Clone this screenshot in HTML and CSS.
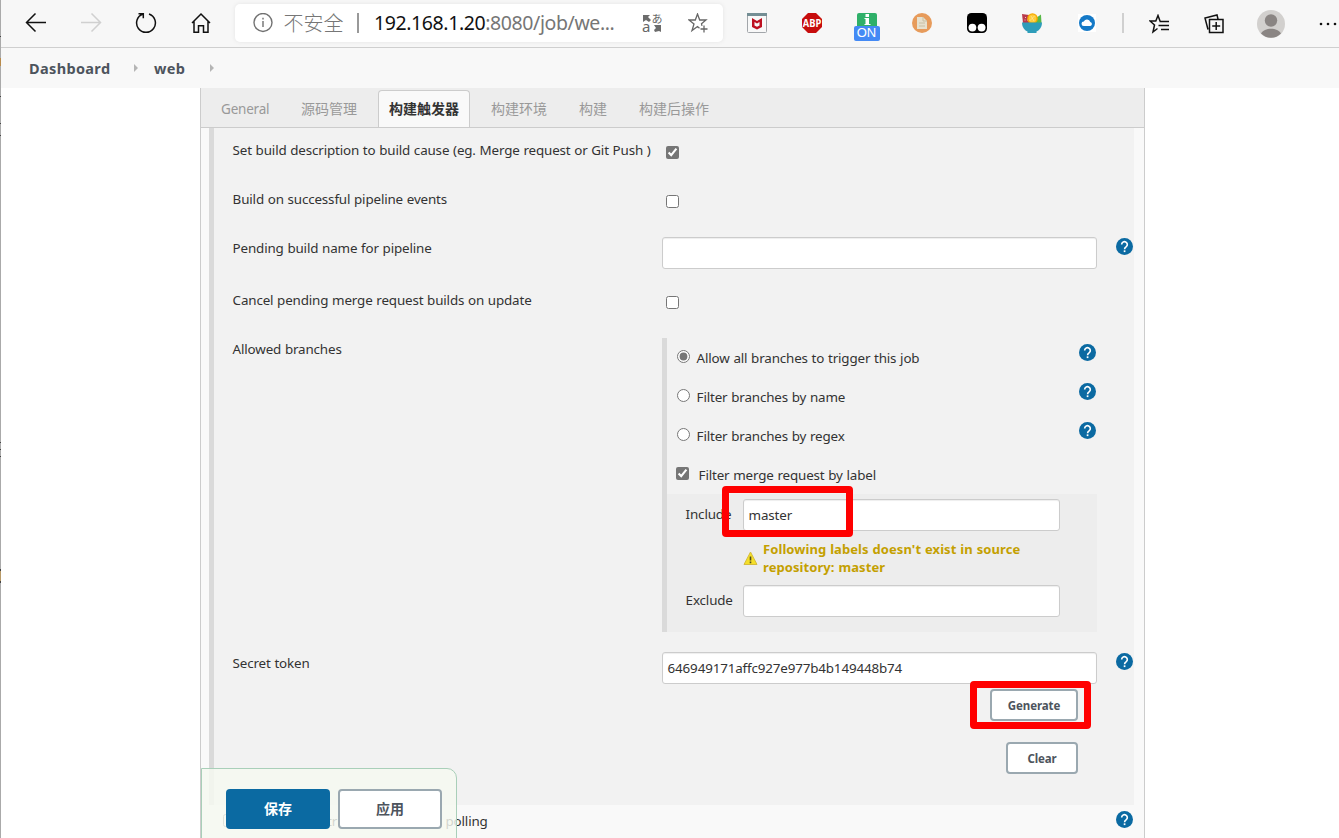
FILE: index.html
```html
<!DOCTYPE html>
<html lang="zh-CN">
<head>
<meta charset="utf-8">
<title>web Config [Jenkins]</title>
<link rel="stylesheet" href="styles.css">
</head>
<body>
<svg class="defs" width="0" height="0">
  <symbol id="help" viewBox="0 0 24 24"><circle cx="12" cy="12" r="12" fill="#0b6aa2"/><path d="M8 9.200a4 4 0 1 1 6.500 3.100c-1.600 1.200-2.400 1.800-2.400 3.500" fill="none" stroke="#fff" stroke-width="2.300"/><rect x="10.900" y="17.400" width="2.400" height="2.500" fill="#fff"/></symbol>
</svg>
<div class="window">
  <div class="edge"><i class="t1"></i><i class="t2"></i><i class="t3"></i><i class="t4"></i><i class="t5"></i><i class="t6"></i><i class="t7"></i><i class="t8"></i><i class="t9"></i></div>
  <header class="toolbar">
    <nav class="nav-icons">
      <svg width="22" height="22" viewBox="0 0 22 22" fill="none" stroke="#111" stroke-width="1.500"><path d="M21 10.500H1.500M10.500 1.500l-9 9 9 9"/></svg>
      <svg width="22" height="22" viewBox="0 0 22 22" fill="none" stroke="#d0d0d0" stroke-width="1.500"><path d="M1 10.500h19.500M11.500 1.500l9 9-9 9"/></svg>
      <svg width="22" height="22" viewBox="0 0 22 22" fill="none" stroke="#111" stroke-width="1.500"><path d="M14 2A9.400 9.400 0 1 1 8 2M3.500 1.700h4.800V6.200"/></svg>
      <svg width="22" height="22" viewBox="0 0 22 22" fill="none" stroke="#111" stroke-width="1.500"><path d="M2 11l9-9 9 9M4 9.500v10.700h4.500v-6.500h5v6.500H18V9.500"/></svg>
    </nav>
    <div class="address">
      <svg class="info" width="20" height="20" viewBox="0 0 20 20" fill="none" stroke="#717171" stroke-width="1.400"><circle cx="10" cy="9.500" r="9"/><path d="M10 8v6M10 4.800v1.700"/></svg>
      <span class="insecure">不安全</span><span class="sep"></span>
      <span class="url"><b>192.168.1.20</b>:8080/job/we...</span>
      <svg class="translate" width="22" height="24" viewBox="0 0 22 24"><path d="M1 4h7l-2 2 3 3-2 2-3-2-3 2zM12 14h7v7l-2-1-4 1-1-2 2-2z" fill="#6c6c6c"/><text x="9.500" y="12" class="kana">あ</text><text x="0" y="21" class="latin">a</text></svg>
      <svg class="star" width="20" height="20" viewBox="0 0 20 20" fill="none" stroke="#666" stroke-width="1.300"><path d="M11.500 15.200L9.500 13.500l-5.500 4 2-6.500-5-4h6.300L9.500 1l2.200 6H18l-4.500 3.800.5 2M16 12.500v7M12.500 16h7"/></svg>
    </div>
    <div class="extensions">
      <svg width="20" height="20" viewBox="0 0 20 20"><rect x=".5" y=".5" width="19" height="19" rx="1" fill="#f8f8f8" stroke="#a2a6aa"/><path d="M0 0h20v3H0z" fill="#748e94"/><path d="M5 5l5 3 5-3v9l-5 2.500L5 14z" fill="#bd1020"/><path d="M7.500 9l2.500 1.400L12.500 9v3.500L10 13.800l-2.500-1.300z" fill="#f8f8f8"/></svg>
      <svg width="20" height="20" viewBox="0 0 20 20"><path d="M6 0h8l6 6v8l-6 6H6l-6-6V6z" fill="#c70d0d"/><text x="10" y="13.800" text-anchor="middle" class="abp" textLength="18.500" lengthAdjust="spacingAndGlyphs">ABP</text></svg>
      <svg width="26" height="28" viewBox="0 0 26 28"><rect x="3" y="0" width="20" height="16" rx="2" fill="#2fb069"/><path d="M11.500 1h3.500v3h-3.500zM10.500 5H15v6h1.500v1h-6v-1h1V6h-1z" fill="#fff"/><rect x="0" y="13" width="26" height="15" rx="2" fill="#448af5"/><text x="12.500" y="24.300" text-anchor="middle" class="on">ON</text></svg>
      <svg width="20" height="20" viewBox="0 0 20 20"><circle cx="10" cy="10" r="10" fill="#e79b5b"/><path d="M5 4h6l4 4v8H5z" fill="#e6e1cf"/><path d="M11 4v4h4M7 10h6M7 13h6" stroke="#c9c0a4" fill="none"/></svg>
      <svg width="20" height="20" viewBox="0 0 20 20"><rect width="20" height="20" rx="4.500"/><circle cx="5.400" cy="14.600" r="3.900" fill="#fff"/><circle cx="14.600" cy="14.600" r="3.900" fill="#fff"/></svg>
      <svg width="20" height="20" viewBox="0 0 20 20"><path d="M0 1l7 1 2 8H1z" fill="#b93a4b"/><path d="M3 4.500h1M5 7h1M2.500 7h1" stroke="#f0c8c4"/><path d="M14 5l5-3.500.500 8.500H13z" fill="#58b947"/><circle cx="10.500" cy="5.500" r="5.300" fill="#f5a900"/><circle cx="10.500" cy="5.500" r="3.900" fill="#ffcb38"/><path d="M7.500 8l5-5M9 3l3 5" stroke="#ffe6a0" stroke-width=".7"/><path d="M0 9.500h20c0 5-3 8-5.500 9V20h-9v-1.500C3 17.500 0 14.500 0 9.500z" fill="#2e9dba"/></svg>
      <svg width="20" height="20" viewBox="0 0 20 20"><path fill="#fff" d="M1 1h18v18H1z"/><circle cx="10" cy="10" r="8" fill="#1479c7"/><path d="M6.800 13a2.300 2.300 0 0 1 0-4.600 3.500 3.500 0 0 1 6.500.5 2.100 2.100 0 0 1 0 4.100z" fill="#fff"/></svg>
    </div>
    <span class="divider"></span>
    <div class="tools">
      <svg width="20" height="20" viewBox="0 0 20 20" fill="none" stroke="#111" stroke-width="1.500"><path d="M11 7L9 1.500 6.800 7H1l4.500 4-1.500 7 4.500-3.500M10.500 7.500H20M9.500 11.500H20M12 15.500h8"/></svg>
      <svg width="20" height="20" viewBox="0 0 20 20" fill="none" stroke="#111" stroke-width="1.500"><path d="M4 15.500L1 4l12-3 1 4M5.500 5.500H19V18.500H5.500zM12.200 8v8M8.200 12h8"/></svg>
      <svg class="avatar" width="28" height="28" viewBox="0 0 28 28"><circle cx="14" cy="14" r="14" fill="#d2d0ce"/><circle cx="14" cy="10.500" r="6.200" fill="#8a8583"/><path d="M4 23.500c3-6.500 17-6.500 20 0A14 14 0 0 1 4 23.500z" fill="#8a8583"/></svg>
      <svg class="more" width="18" height="4" viewBox="0 0 18 4" fill="#111"><circle cx="2" cy="2" r="1.300"/><circle cx="9" cy="2" r="1.300"/><circle cx="16" cy="2" r="1.300"/></svg>
    </div>
  </header>
  <nav class="crumbs"><a class="c1">Dashboard</a><i></i><a class="c2">web</a><i></i></nav>
  <main class="card">
    <div class="tabs"><a class="tab general">General</a><a class="tab">源码管理</a><a class="tab active">构建触发器</a><a class="tab">构建环境</a><a class="tab">构建</a><a class="tab">构建后操作</a></div>
    <section class="group">
      <div class="row"><label>Set build description to build cause (eg. Merge request or Git Push )</label><div class="field"><input type="checkbox" checked></div></div>
      <div class="row"><label>Build on successful pipeline events</label><div class="field"><input type="checkbox"></div></div>
      <div class="row tall"><label>Pending build name for pipeline</label><div class="field"><div class="box"></div></div><svg class="help"><use href="#help"/></svg></div>
      <div class="row"><label>Cancel pending merge request builds on update</label><div class="field"><input type="checkbox"></div></div>
      <div class="row branches"><label>Allowed branches</label>
        <div class="field"><div class="nested">
          <div class="option"><input type="radio" name="b" checked><span>Allow all branches to trigger this job</span><svg class="help"><use href="#help"/></svg></div>
          <div class="option"><input type="radio" name="b"><span>Filter branches by name</span><svg class="help"><use href="#help"/></svg></div>
          <div class="option"><input type="radio" name="b"><span>Filter branches by regex</span><svg class="help"><use href="#help"/></svg></div>
          <div class="option check"><input type="checkbox" checked><span>Filter merge request by label</span></div>
          <div class="labels">
            <div class="pair"><span class="k">Include</span><div class="box">master</div><div class="mark include"></div></div>
            <div class="warning"><svg width="15" height="15" viewBox="0 0 15 15"><path d="M7.500 1l6.500 12.500H1z" fill="#f5df28" stroke="#d5bc3c" stroke-linejoin="round"/><path d="M7.500 5.500v4M7.500 10.500v1.700" stroke="#4e4a20" stroke-width="1.600"/></svg><p>Following labels doesn't exist in source<br>repository: master</p></div>
            <div class="pair"><span class="k">Exclude</span><div class="box"></div></div>
          </div>
        </div></div>
      </div>
      <div class="row token"><label>Secret token</label>
        <div class="field"><div class="box">646949171affc927e977b4b149448b74</div>
          <div class="buttons"><button class="btn generate">Generate<span class="mark gen"></span></button><button class="btn clear">Clear</button></div>
        </div><svg class="help"><use href="#help"/></svg></div>
    </section>
    <div class="scm"><input type="checkbox"><span>GitHub hook trigger for GITScm polling</span><svg class="help"><use href="#help"/></svg></div>
  </main>
  <div class="savebar"><button class="save">保存</button><button class="apply">应用</button></div>
</div>
</body>
</html>
```

FILE: styles.css
```css
* { box-sizing: border-box; }
body { margin: 0; background: #fff; font: 13.4px/18px "Noto Sans", "Noto Sans CJK SC", sans-serif; color: #333; }
svg { display: block; flex: none; }
input { margin: 0; width: 13px; height: 13px; flex: none; accent-color: #767676; }
button { font-family: inherit; padding: 0; }
.defs { position: absolute; }
.window { position: relative; width: 1339px; height: 838px; overflow: hidden; }
.edge { position: absolute; left: 0; top: 0; width: 1px; height: 838px; background: #aaa; z-index: 3; }
.edge i { position: absolute; left: 0; width: 1px; height: 1px; background: #444; }
.edge .t1 { top: 36px; } .edge .t2 { top: 58px; height: 8px; background: #b88b4c; } .edge .t3 { top: 96px; }
.edge .t4 { top: 123px; } .edge .t5 { top: 135px; } .edge .t6 { top: 442px; } .edge .t7 { top: 449px; }
.edge .t8 { top: 456px; } .edge .t9 { top: 569px; height: 14px; background: #b89a68; border: solid #444; border-width: 2px 0; }

.toolbar { display: flex; height: 48px; background: #f7f7f7; border-bottom: 1px solid #cfcfcf; }
.nav-icons { display: flex; gap: 33px; padding: 12px 0 0 25px; width: 235px; flex: none; }
.address { display: flex; align-items: center; width: 488px; height: 38px; margin-top: 4px; padding-left: 18px; flex: none; background: #fff; border-radius: 5px; box-shadow: 0 0 4px #e4e4e4; color: #767676; font-size: 19.500px; line-height: 28px; white-space: nowrap; }
.insecure { margin-left: 10.500px; width: 60.500px; font-family: "Noto Sans CJK SC", sans-serif; font-weight: 300; font-size: 20px; }
.sep { width: 2px; height: 20px; background: #999; margin: 0 15px 0 13px; }
.url { width: 268px; letter-spacing: -.4px; }
.url b { color: #111; font-weight: 400; }
.kana { font: 11px "Noto Sans CJK JP", sans-serif; fill: #666; }
.latin { font: 15px "Noto Sans", sans-serif; fill: #666; }
.star { margin-left: 24px; }
.extensions { display: flex; gap: 35px; padding: 13px 0 0 24px; width: 399px; flex: none; }
.extensions svg:nth-child(3) { margin: 0 -3px; }
.abp { font: bold 10px "Open Sans", sans-serif; fill: #fff; }
.on { font: 13px "Liberation Sans", sans-serif; fill: #fff; }
.divider { width: 2px; height: 20px; margin-top: 13px; background: #d0d0d0; flex: none; }
.tools { display: flex; align-items: center; width: 215px; padding-left: 25px; gap: 35px; flex: none; }
.tools .avatar { margin-left: -2px; }
.tools .more { margin-left: -1px; }

.crumbs { display: flex; align-items: center; height: 40px; padding-left: 29px; background: #f8f8f8; color: #4d545d; font-weight: 700; font-size: 14.500px; letter-spacing: .35px; }
.crumbs i { border: solid transparent; border-width: 4px 0 4px 4px; border-left-color: #b5b5b5; }
.c1 { width: 105px; } .c2 { width: 35px; margin-left: 16px; } .c2 + i { margin-left: 21px; }

.card { width: 945px; height: 750px; margin-left: 200px; border: solid #ccc; border-width: 0 1px; background: #f9f9f9; letter-spacing: -.15px; word-spacing: .4px; }
.tabs { display: flex; height: 40px; padding: 2px 0 0 10px; background: #ededed; border-bottom: 1px solid #ccc; color: #999; font-size: 14px; letter-spacing: 0; }
.tab { padding: 10px; height: 37px; margin-right: 12px; white-space: nowrap; }
.general { width: 68px; font-size: 13.5px; letter-spacing: -.2px; }
.active { width: 92px; margin: 0 11px 0 -1px; background: #f9f9f9; border: 1px solid #ccc; border-bottom: 0; border-radius: 4px 4px 0 0; color: #333; font-weight: 700; padding: 9px 10px; }
.group { width: 925px; height: 677px; margin-left: 8px; border-left: 5px solid #dadada; background: #f2f2f2; padding: 8px 0 0 18px; }
.row { display: grid; grid-template-columns: 430px 435px 37px; height: 49px; }
.row label { line-height: 28px; padding-left: .6px; white-space: nowrap; }
.row.tall { height: 52px; }
.row.branches { height: 314px; }
.row.token { height: 156px; }
.field > input { display: block; margin: 10px 0 0 4px; }
.box { height: 32px; border: 1px solid #ccc; border-radius: 3px; background: #fff; box-shadow: inset 0 1px 1px #eee; padding-left: 4.6px; line-height: 31px; }
.field > .box { margin-top: 3px; }
.help { width: 17px; height: 17px; }
.row > .help { margin: 4px 0 0 19px; }
.nested { height: 294px; margin-top: 3px; border-left: 5px solid #dadada; }
.option { display: flex; height: 39px; padding: 0 0 0 10px; }
.option input { margin-top: 12px; }
.option span { flex: 1; line-height: 40px; margin-left: 6.6px; }
.option .help { margin: 6px 1px 0 0; }
.option.check { padding-left: 9px; }
.option.check span { margin-left: 9.6px; }
.labels { height: 138px; background: #ededed; padding: 5px 37px 0 18px; }
.pair { position: relative; display: flex; }
.pair .k { width: 58px; line-height: 30px; padding-left: .6px; }
.pair .box { flex: 1; }
.warning { display: flex; height: 54px; padding: 9px 0 0 57px; color: #c4a000; font-weight: 700; font-size: 13px; letter-spacing: .08px; }
.warning svg { margin: 11px 5px 0 1px; }
.warning p { margin: 0; white-space: nowrap; }
.buttons { display: flex; flex-direction: column; align-items: flex-end; gap: 21px; padding: 5px 19px 0 0; }
.btn { position: relative; height: 32px; background: #fff; border: 2px solid #9aa8b0; border-radius: 4px; color: #4d545d; font-weight: 700; font-size: 11.5px; letter-spacing: -.1px; }
.generate { width: 88px; } .clear { width: 72px; }
.mark { position: absolute; border: 7px solid #f00; border-radius: 4px; z-index: 2; }
.include { left: 37px; top: -13px; width: 131px; height: 51px; }
.gen { left: -22px; top: -10px; width: 121px; height: 48px; }
.scm { display: flex; padding: 7px 10px 0 22px; }
.scm input { margin-top: 2px; }
.scm span { flex: 1; margin-left: 9px; }
.scm .help { margin: -1px 1px 0 0; }
.savebar { position: absolute; left: 201px; top: 768px; width: 256px; height: 80px; display: flex; gap: 8px; padding: 20px 0 0 24px; border: 1px solid #a9cfb9; border-radius: 0 10px 0 0; background: rgba(245,249,240,.82); }
.savebar button { width: 104px; height: 40px; border-radius: 4px; font-weight: 700; font-size: 14px; padding-bottom: 2px; }
.save { border: 0; background: #0b6aa2; color: #fff; }
.apply { border: 2px solid #9aa8b0; background: #fff; color: #4d545d; }
```
